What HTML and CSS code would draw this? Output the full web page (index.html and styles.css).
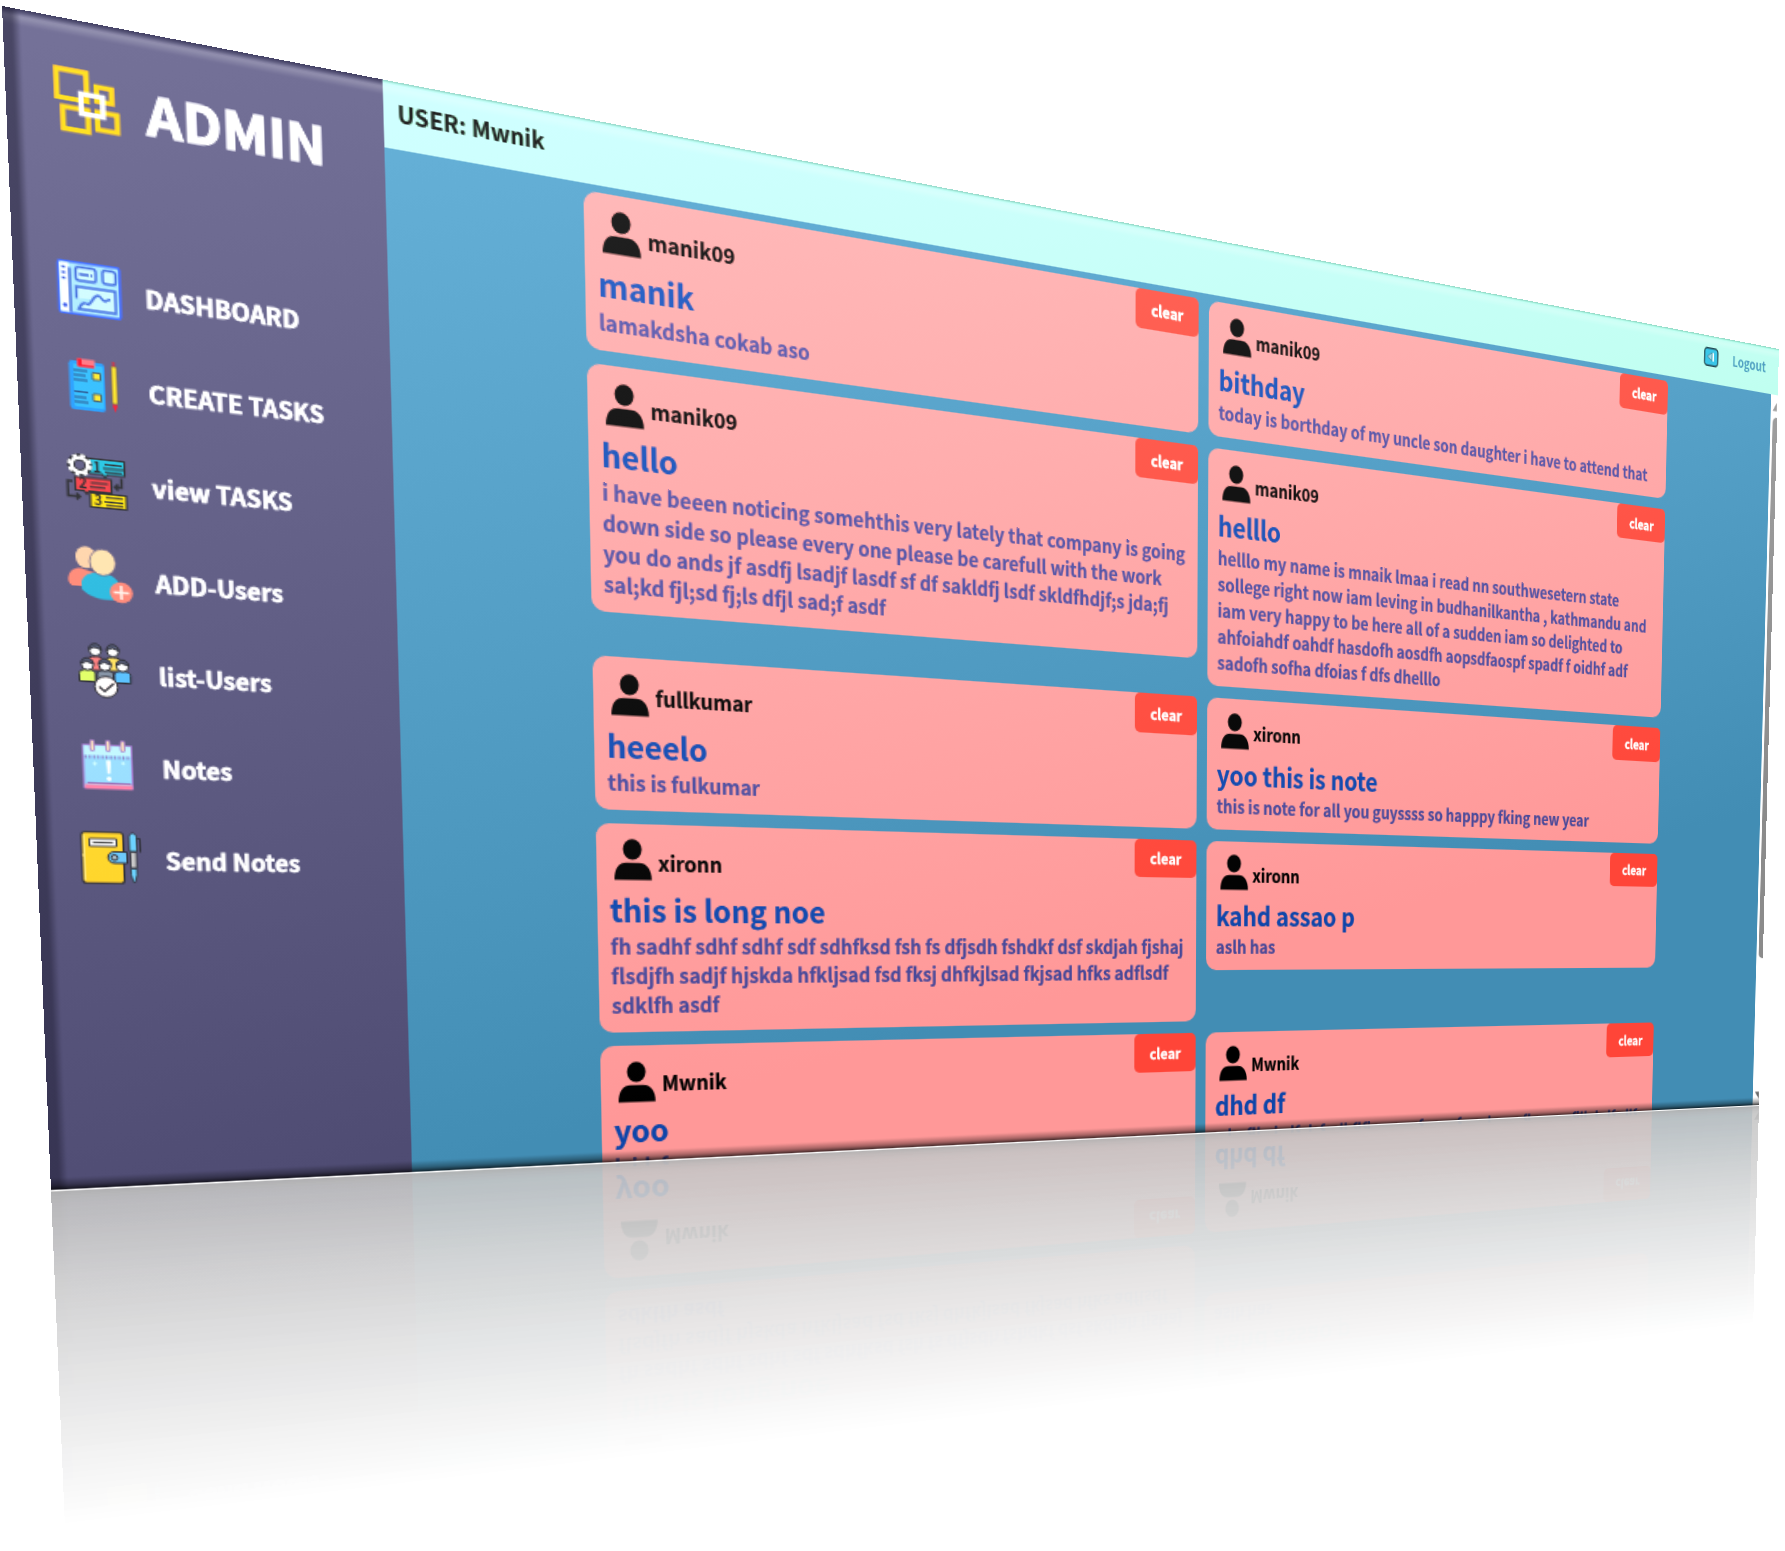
FILE: index.html
```html
<!DOCTYPE html>
<html lang="en">
<head>
<meta charset="utf-8">
<title>Admin - Notes</title>
<link rel="stylesheet" href="styles.css">
</head>
<body>
<svg class="defs" width="0" height="0">
  <symbol id="person" viewBox="0 0 28 31">
    <ellipse cx="13.6" cy="7.8" rx="7" ry="7.6"/>
    <path d="M0 30.5C0 22 3.5 17.8 9 17.8h9.5c5.500 0 9.300 4.700 9.300 12.700z"/>
  </symbol>
</svg>
<div class="scene">
  <div class="screen">
    <aside class="sidebar">
      <div class="brand">
        <svg class="icon" viewBox="0 0 40 40" fill="none" stroke="#ffbd00" stroke-width="3.100">
          <path d="M3.800 2.900h17v17.600h-17zM26.500 10.300h8.700v9h-8.700zM6.800 26h14.300v13.600h-14.300zM26.500 26h11.400v11h-11.400z"/>
          <path d="M17.400 16.200h12.500v12.400h-12.500z" stroke="#fff"/>
        </svg>
        <h1>ADMIN</h1>
      </div>
      <nav class="menu">
        <a class="item">
          <svg class="icon" viewBox="0 0 40 40">
            <rect x="2.500" y="3.700" width="35.300" height="32.600" rx="1.500" fill="#94d0f4" stroke="#2a54f2" stroke-width="1.500"/>
            <path d="M3.200 4.500h5.300v31h-5.300z" fill="#e4f0ff"/>
            <path d="M9 7.500v28" stroke="#2449b4" stroke-width="1.400" fill="none"/>
            <path d="M4.500 7.500h2M4.500 11h2M4.500 14.500h2" stroke="#2440b8" stroke-width="1.500"/>
            <circle cx="5.800" cy="31.500" r="1.200" fill="#1c38c8"/>
            <g fill="#b4def6" stroke="#2b55c0" stroke-width="1.400">
              <rect x="12.500" y="6.500" width="11.500" height="8.500" rx="1.800"/>
              <rect x="28" y="6.500" width="7.500" height="8.500" rx="1.800"/>
              <path d="M12.500 26.500v-7.500h22.500v14h-21.500c2-5 4-4.500 5.500-3.500 2.500-1 3-6.500 6-6.500 2 0 2 3.500 4 3 1-.5 1.500-1.500 3-1.300"/>
            </g>
            <path d="M14.500 11h5.500M21 11h1" stroke="#2449b4" stroke-width="1.400"/>
          </svg>
          <span>DASHBOARD</span>
        </a>
        <a class="item">
          <svg class="icon" viewBox="0 0 40 40">
            <rect x="6.500" y="5" width="20.500" height="31" rx="2.200" fill="#1488e8"/>
            <rect x="9" y="7" width="17" height="27" rx="1" fill="#1fa6e4"/>
            <path d="M11.500 3.500h10v5h-10z" fill="#e8606c"/><path d="M11.500 3.500h2.500v5h-2.500zM12 7.200h9v1.300h-9z" fill="#f00014"/>
            <path d="M9 11h8M9 14h7M9 17h8M9 24.500h8M9 28h7M9 31h8" stroke="#144078" stroke-width="1"/>
            <path d="M20 11.500h4.500v4.500h-4.500zM20 25h4.500v4.500h-4.500z" fill="#ffd21a" stroke="#345058"/>
            <path d="M31 6h3v24h-3z" fill="#ffd414" stroke="#5c5438" stroke-width=".8"/>
            <path d="M31.500 3h1.800v3h-1.800z" fill="#a02438"/><path d="M31 30.500h3l-1.500 5z" fill="#e8081c"/>
          </svg>
          <span>CREATE TASKS</span>
        </a>
        <a class="item">
          <svg class="icon" viewBox="0 0 40 40">
            <g stroke="#1c1d22" stroke-width="1.100">
              <path d="M15 5.500h21.500v9.500h-10l-1.500 2-1.500-2h-8.500z" fill="#14b0cc"/>
              <path d="M7.500 18h21v8.500h-13l-1.500 2-1.500-2h-5z" fill="#e03038"/>
              <path d="M16 27.500h21v9h-21z" fill="#f4d000"/>
              <path d="M25 8.500h10M24 11h12M25 13.300h10M16.500 21h10M16 23.800h9M25 29.800h10M24 32.500h11M25 34.800h10" fill="none"/>
              <path d="M6 21h-2.800v9.500h6M34.500 16.500v6h-4M8 28.500l2 2-2 2M32.500 20.500l-2 2 2 2" fill="none" stroke-width="1.400"/>
            </g>
            <circle cx="10.500" cy="10.300" r="5" fill="none" stroke="#1c1d22" stroke-width="4.500"/>
            <circle cx="10.500" cy="10.300" r="6.200" fill="none" stroke="#fff" stroke-width="1.900" stroke-dasharray="2.500 2.370"/>
            <circle cx="10.500" cy="10.300" r="4.700" fill="none" stroke="#fff" stroke-width="2.200"/>
            <g class="num"><text x="18" y="13.800">1</text><text x="9.500" y="25.500">2</text><text x="18" y="35.200">3</text></g>
          </svg>
          <span>view TASKS</span>
        </a>
        <a class="item">
          <svg class="icon" viewBox="0 0 40 40">
            <path d="M1.500 21.500c1-4.500 5-7 9-5.500l7 2-5 9h-9c-2-1-2.500-3.500-2-5.500z" fill="#f27866"/>
            <path d="M9 24c1.500-5 6.500-7 11.500-6.500 5 .3 9 2.500 10.500 6.500l-3 10.500c-8 1-15-1-19-5.500z" fill="#1ca8cc"/>
            <ellipse cx="12" cy="8.300" rx="6" ry="7" fill="#ecc098"/>
            <ellipse cx="21.700" cy="10.800" rx="7.600" ry="8.500" fill="#f4d09c" stroke="#504c74" stroke-width=".7"/>
            <circle cx="32" cy="29.500" r="6.800" fill="#f07868"/>
            <path d="M32 25v9M27.500 29.500h9" stroke="#ffe0d8" stroke-width="1.500"/>
          </svg>
          <span>ADD-Users</span>
        </a>
        <a class="item">
          <svg class="icon" viewBox="0 0 40 40">
            <g stroke="#1e1f28" stroke-width="1">
              <path d="M10.500 20v-6c0-2 1.500-3 5-3s4.500 1 4.500 3v6z" fill="#f47070"/>
              <path d="M21 20v-6c0-2 1.500-3 4.500-3s5 1 5 3v6z" fill="#f4d050"/>
              <circle cx="15.300" cy="7" r="3.600" fill="#fff"/><circle cx="25.600" cy="7" r="3.600" fill="#fff"/>
              <path d="M11.700 6.500c0-5 7-5 7.200 0l-4-1.500zM22 6.500c0-5 7-5 7.200 0l-4-1.500z" fill="#444b66"/>
              <path d="M5.500 27.500v-5c0-2 2-2.800 5-2.800s4.500.8 4.500 2.800v5z" fill="#d0f058"/>
              <path d="M16 27.500v-5c0-2 2-2.800 5-2.800s4.500.8 4.500 2.800v5z" fill="#748294"/>
              <path d="M26 27.500v-5c0-2 2-2.800 5-2.800s4.700.8 4.700 2.800v5z" fill="#4ab0f4"/>
              <circle cx="10.500" cy="16.500" r="3.600" fill="#fff"/><circle cx="20.700" cy="16.500" r="3.600" fill="#fff"/><circle cx="31" cy="16.500" r="3.600" fill="#fff"/>
              <path d="M6.800 16c0-5 7-5 7.200 0l-4-1.500zM17 16c0-5 7-5 7.200 0l-4-1.500zM27.400 16c0-5 7-5 7.200 0l-4-1.500z" fill="#444b66"/>
              <circle cx="21" cy="30.500" r="6.800" fill="#fff4f0"/>
              <path d="M16.800 30.500l3.200 3 5.500-5.500" fill="none" stroke-width="1.200"/>
            </g>
          </svg>
          <span>list-Users</span>
        </a>
        <a class="item">
          <svg class="icon" viewBox="0 0 40 40">
            <g transform="translate(.2 .4) scale(.95 .97)">
            <rect x="6" y="6.500" width="30" height="29" fill="#8cd0f6" stroke="#9a6cc2" stroke-width="1"/>
            <path d="M6.500 7h29v6.500h-29z" fill="#b4e8fa"/>
            <path d="M7 14.500h29" stroke="#806cb0" stroke-width="2" stroke-dasharray="1 1.600"/>
            <path d="M6.500 33h29.500v3h-29.500z" fill="#fa769c"/><path d="M8 32h27" stroke="#8c5ca4" stroke-width="1"/>
            <g fill="#f6d4b0" stroke="#946cb4" stroke-width=".8"><rect x="10.500" y="3.200" width="2.600" height="7" rx="1.200"/><rect x="20.200" y="3.200" width="2.600" height="7" rx="1.200"/><rect x="29.300" y="3.200" width="2.600" height="7" rx="1.200"/></g>
            <path d="M20.200 16.500h2.600l-.5 9h-1.600z" fill="#fff"/><circle cx="21.500" cy="29" r="1.400" fill="#fff"/>
            <path d="M13 17.500v3M11.500 19h3M30.500 17v2.500M29.300 18.300h2.500" stroke="#c7f2ff" stroke-width=".8"/>
            </g>
          </svg>
          <span>Notes</span>
        </a>
        <a class="item">
          <svg class="icon" viewBox="0 0 40 40">
            <rect x="3" y="2.800" width="24.500" height="33.500" rx="2" fill="#ffca20" stroke="#22232c" stroke-width="1.100"/>
            <path d="M4.300 4.500v30M4 18h-1" stroke="#ffe080" stroke-width="1"/>
            <path d="M7.500 7h16v5h-16z" fill="#fff" stroke="#3a3a3a"/><path d="M9.500 9.600h12" stroke="#333"/>
            <path d="M22 15.500h7.500v7.500h-7.500c-5 0-5-7.500 0-7.500z" fill="#60bcee" stroke="#22232c"/>
            <circle cx="22" cy="19.300" r="1.800" fill="#a8bcc6" stroke="#22232c"/>
            <path d="M35 6.500h2.500v9" fill="none" stroke="#22232c"/>
            <path d="M31 5.500c.5-3.500 4-3.500 4.500 0v9.500h-4.500z" fill="#60c6f2" stroke="#22232c" stroke-width=".8"/>
            <path d="M31.500 15.500h3.600v10.500h-3.600z" fill="#bcbcbc" stroke="#22232c" stroke-width=".8"/>
            <path d="M31.500 26.500h3.600v4l-1.200 5h-1l-1.400-5z" fill="#60c6f2" stroke="#22232c" stroke-width=".8"/>
          </svg>
          <span>Send Notes</span>
        </a>
      </nav>
    </aside>
    <main class="main">
      <header class="topbar">
        <span class="user">USER: Mwnik</span>
        <span class="logout">
          <svg viewBox="0 0 19 18"><rect x=".9" y=".7" width="17.200" height="16.600" rx="3.500" fill="#24b0d2" stroke="#10303a" stroke-width="1.500"/><path d="M10.500 4.800v7.800l-6-3.900z" fill="#86c2d2" stroke="#2c6474" stroke-width=".7"/><path d="M12.200 4.800v8" stroke="#e9fbff" stroke-width="1.700"/></svg>
          Logout
        </span>
      </header>
      <div class="body">
        <section class="notes">
          <article class="note"><button class="clear">clear</button><div class="by"><svg class="avatar"><use href="#person"/></svg><span>manik09</span></div><h2>manik</h2><p>lamakdsha cokab aso</p></article>
          <article class="note"><button class="clear">clear</button><div class="by"><svg class="avatar"><use href="#person"/></svg><span>manik09</span></div><h2>bithday</h2><p>today is borthday of my uncle son daughter i have to attend that</p></article>
          <article class="note"><button class="clear">clear</button><div class="by"><svg class="avatar"><use href="#person"/></svg><span>manik09</span></div><h2>hello</h2><p>i have beeen noticing somehthis very lately that company is going<br>down side so please every one please be carefull with the work<br>you do ands jf asdfj lsadjf lasdf sf df sakldfj lsdf skldfhdjf;s jda;fj<br>sal;kd fjl;sd fj;ls dfjl sad;f asdf</p></article>
          <article class="note"><button class="clear">clear</button><div class="by"><svg class="avatar"><use href="#person"/></svg><span>manik09</span></div><h2>helllo</h2><p>helllo my name is mnaik lmaa i read nn southwesetern state<br>sollege right now iam leving in budhanilkantha , kathmandu and<br>iam very happy to be here all of a sudden iam so delighted to<br>ahfoiahdf oahdf hasdofh aosdfh aopsdfaospf spadf f oidhf adf<br>sadofh sofha dfoias f dfs dhelllo</p></article>
          <article class="note"><button class="clear">clear</button><div class="by"><svg class="avatar"><use href="#person"/></svg><span>fullkumar</span></div><h2>heeelo</h2><p>this is fulkumar</p></article>
          <article class="note"><button class="clear">clear</button><div class="by"><svg class="avatar"><use href="#person"/></svg><span>xironn</span></div><h2>yoo this is note</h2><p>this is note for all you guyssss so happpy fking new year</p></article>
          <article class="note"><button class="clear">clear</button><div class="by"><svg class="avatar"><use href="#person"/></svg><span>xironn</span></div><h2>this is long noe</h2><p>fh sadhf sdhf sdhf sdf sdhfksd fsh fs dfjsdh fshdkf dsf skdjah fjshaj<br>flsdjfh sadjf hjskda hfkljsad fsd fksj dhfkjlsad fkjsad hfks adflsdf<br>sdklfh asdf</p></article>
          <article class="note"><button class="clear">clear</button><div class="by"><svg class="avatar"><use href="#person"/></svg><span>xironn</span></div><h2>kahd assao p</h2><p>aslh has</p></article>
          <article class="note"><button class="clear">clear</button><div class="by"><svg class="avatar"><use href="#person"/></svg><span>Mwnik</span></div><h2>yoo</h2><p>k jdsf</p></article>
          <article class="note"><button class="clear">clear</button><div class="by"><svg class="avatar"><use href="#person"/></svg><span>Mwnik</span></div><h2>dhd df</h2><p>sdmflkajsdf dsfs dkflfjs awe sf eras fwa dsans fkas aw fjlkds lfsdlf</p></article>
        </section>
        <div class="scrollbar">
          <svg viewBox="0 0 9 14"><path d="M2.500 12l6-9 .5 9z" fill="#8b8b8b"/></svg>
          <i class="thumb"></i>
          <svg class="down" viewBox="0 0 9 14"><path d="M3 4h6v8z" fill="#6b6b6b"/></svg>
        </div>
      </div>
    </main>
    <div class="light"></div>
    <div class="bevel"></div>
  </div>
  <div class="floor"></div>
</div>
</body>
</html>
```
FILE: styles.css
```css
* { box-sizing: border-box; }

html, body { margin: 0; }

body {
  width: 1785px;
  height: 1551px;
  overflow: hidden;
  background: #fff;
  font-family: "Noto Sans CJK SC", "Noto Sans CJK JP", "Noto Sans", sans-serif;
  font-weight: 700;
}

h1, h2, p { margin: 0; }

.defs { position: absolute; }

/* The whole plane is tilted in perspective; the mirror image lies in the same plane. */
.scene {
  position: relative;
  width: 1536px;
  height: 754px;
  transform-origin: 0 0;
  transform: matrix3d(1.81873, 0.353145, 0, 0.000372025, 0.06817, 1.644615, 0, 0.0000624536, 0, 0, 1, 0, 2, 6, 0, 1);
}

.screen {
  position: relative;
  display: flex;
  width: 1536px;
  height: 754px;
  overflow: hidden;
  background: #428db4;
  -webkit-box-reflect: below 1px linear-gradient(to bottom, transparent 70%, rgba(0, 0, 0, 0.018) 84%, rgba(0, 0, 0, 0.05) 92%, rgba(0, 0, 0, 0.13));
}

/* Sidebar */
.sidebar {
  flex: none;
  width: 226.6px;
  padding: 28.6px 0 0 23px;
  background: #4e4b72;
  color: #fff;
  -webkit-text-stroke: 0.4px #fff;
}

.icon { flex: none; width: 40px; height: 40px; overflow: visible; }

.brand {
  display: flex;
  align-items: center;
  gap: 15px;
  height: 40px;
  margin: 0 0 79px 2px;
}

.brand h1 {
  font-size: 33.2px;
  line-height: 36px;
  padding-top: 3.5px;
  -webkit-text-stroke: 0.9px #fff;
}

.menu { display: flex; flex-direction: column; gap: 21.2px; }

.item {
  display: flex;
  align-items: center;
  gap: 12.6px;
  height: 40px;
  font-size: 15.1px;
  line-height: 20px;
  white-space: nowrap;
}

.item span { padding-top: 0.8px; }

.num { font-size: 8.500px; fill: #16171c; -webkit-text-stroke: 0; }

/* Main column */
.main { flex: 1; display: flex; flex-direction: column; min-width: 0; }

.topbar {
  flex: none;
  display: flex;
  align-items: center;
  justify-content: space-between;
  height: 44.5px;
  padding: 0 17px 0 9.500px;
  background: #acffdc;
  color: #000;
}

.user {
  padding-bottom: 4px;
  font-size: 15.3px;
  -webkit-text-stroke: 0.2px;
}

.logout {
  display: flex;
  align-items: center;
  gap: 18px;
  font-size: 13px;
  line-height: 20px;
  color: #3a86ac;
  padding-bottom: 5.5px;
}

.logout svg { width: 19px; height: 18px; }

.body { flex: 1; display: flex; min-height: 0; }

.notes {
  flex: 1;
  display: grid;
  grid-template-columns: repeat(2, minmax(0, 1fr));
  align-items: start;
  align-content: start;
  padding: 0 130px;
}

.note {
  position: relative;
  margin: 5px;
  padding: 9px 9px 10px 9.700px;
  border-radius: 10px;
  background: #ff9898;
  -webkit-text-stroke: 0.2px;
}

.by {
  display: flex;
  align-items: center;
  gap: 4.500px;
  height: 40px;
  padding-left: 4px;
  font-size: 15.300px;
  color: #000;
}

.by span { padding-bottom: 1.600px; }

.avatar { width: 28px; height: 31px; margin-top: -3.500px; }

.note h2 {
  padding-top: 0.400px;
  font-size: 22.700px;
  line-height: 30px;
  color: #0e45a9;
}

.note p {
  font-size: 15.170px;
  line-height: 22px;
  white-space: nowrap;
  color: #474797;
}

.clear {
  position: absolute;
  top: 0;
  right: 0;
  width: 60px;
  height: 32.500px;
  padding: 0;
  border: 0;
  border-radius: 5px;
  background: #ff4538;
  color: #fff;
  font: inherit;
  font-size: 12.500px;
  -webkit-text-stroke: 0.3px #fff;
}

.scrollbar {
  flex: none;
  display: flex;
  flex-direction: column;
  align-items: flex-end;
  width: 8.600px;
  background: #fff;
}

.scrollbar svg { width: 8.600px; height: 22px; }
.scrollbar .down { margin-top: auto; }
.thumb { width: 5.800px; height: 537px; background: #8b8b8b; border-radius: 5px 0 0 5px; }

/* Additive sheen, strongest at the upper left */
.light {
  position: absolute;
  inset: 0;
  background: linear-gradient(167deg, rgb(39, 39, 39), #000 73%);
  mix-blend-mode: plus-lighter;
}

.bevel {
  position: absolute;
  inset: 0;
  background:
    linear-gradient(to top, rgba(0, 0, 0, 0.75), rgba(0, 0, 0, 0.35) 3px, transparent 8px),
    linear-gradient(to right, rgba(30, 28, 50, 0.5), rgba(30, 28, 50, 0.5) 5px, transparent 10px),
    linear-gradient(to bottom, rgba(30, 28, 60, 0.6), rgba(30, 28, 60, 0.3) 2px, transparent 4px) 0 0 / 226.6px 100% no-repeat,
    linear-gradient(to bottom, rgba(90, 150, 130, 0.6), rgba(120, 240, 200, 0.35) 1px, transparent 2.5px) 226.6px 0 no-repeat,
    linear-gradient(to bottom, transparent 1px, rgba(255, 255, 255, 0.22) 5px, transparent 10px);
}

.floor {
  position: absolute;
  left: 0;
  top: 755px;
  width: 100%;
  height: 226px;
  background: linear-gradient(to bottom, rgba(0, 0, 0, 0.21), transparent);
}
```
